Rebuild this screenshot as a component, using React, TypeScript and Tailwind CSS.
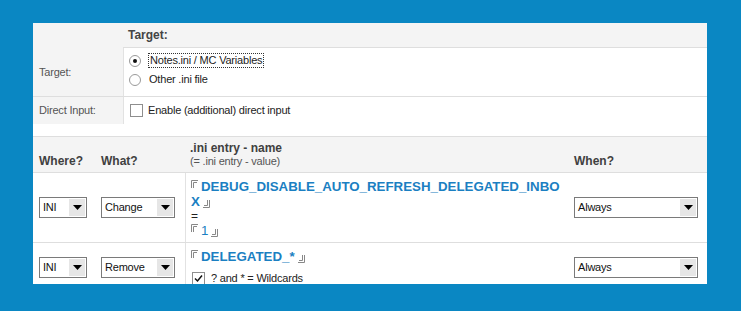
import React from "react";

function Arrow() {
  return (
    <div className="w-[16px] h-[17px] my-[1px] mr-[1px] bg-[#e6e6e6] flex items-center justify-center shrink-0">
      <svg width="9" height="5" viewBox="0 0 9 5">
        <path d="M0 0 H9 L4.5 5 Z" fill="#000" />
      </svg>
    </div>
  );
}

function Select({ value, width }: { value: string; width: string }) {
  return (
    <div className={`${width} h-[21px] border border-[#7a7a7a] bg-white flex items-center justify-between`}>
      <span className="pl-[3px] text-[11px] tracking-[-0.2px] text-[#111]">{value}</span>
      <Arrow />
    </div>
  );
}

function Open() {
  return (
    <svg width="8" height="8" viewBox="0 0 8 8" className="mr-[2px] self-start mt-[1px] shrink-0">
      <path d="M0.5 8 V0.5 H7" stroke="#888" strokeWidth="1" fill="none" />
      <path d="M2.5 8 V2.5 H6" stroke="#888" strokeWidth="1" fill="none" />
    </svg>
  );
}

function Close() {
  return (
    <svg width="8" height="8" viewBox="0 0 8 8" className="ml-[2px] self-end mb-[1px] shrink-0">
      <path d="M7.5 0 V7.5 H1" stroke="#888" strokeWidth="1" fill="none" />
      <path d="M5.5 0 V5.5 H2" stroke="#888" strokeWidth="1" fill="none" />
    </svg>
  );
}

function Radio({ checked }: { checked?: boolean }) {
  return (
    <div className="w-[12px] h-[12px] rounded-full border border-[#9a9a9a] bg-white flex items-center justify-center shrink-0">
      {checked && <div className="w-[4px] h-[4px] rounded-full bg-[#111]" />}
    </div>
  );
}

function Checkbox({ checked }: { checked?: boolean }) {
  return (
    <div className="w-[13px] h-[13px] border border-[#8e8e8e] bg-white flex items-center justify-center shrink-0">
      {checked && (
        <svg width="9" height="9" viewBox="0 0 9 9">
          <path d="M1 4.5 L3.5 7 L8 1.5" stroke="#111" strokeWidth="1.5" fill="none" />
        </svg>
      )}
    </div>
  );
}

export default function App() {
  return (
    <div className="w-[741px] h-[311px] bg-[#0a87c3] pt-[23px] pl-[33px] font-['Liberation_Sans',Arial,sans-serif]">
      <div className="w-[674px] h-[261px] bg-white overflow-hidden text-[11px] tracking-[-0.2px] text-[#222]">
        {/* Top section */}
        <div className="flex">
          <div className="w-[90px] bg-[#f4f4f4] flex items-end">
            <div className="h-[48px] flex items-center pl-[6px] text-[#555]">Target:</div>
          </div>
          <div className="flex-1">
            <div className="h-[25px] bg-[#f4f4f4] border-b border-[#dedede] flex items-center pl-[5px] text-[12px] tracking-normal font-bold text-[#444]">
              Target:
            </div>
            <div className="h-[48px] border-l border-[#e2e2e2] pl-[5px] pt-[3px] flex flex-col">
              <div className="h-[19px] flex items-center gap-[7px]">
                <Radio checked />
                <span className="border border-dotted border-[#333] px-[1px] leading-[13px]">Notes.ini / MC Variables</span>
              </div>
              <div className="h-[19px] flex items-center gap-[8px]">
                <Radio />
                <span>Other .ini file</span>
              </div>
            </div>
          </div>
        </div>
        <div className="flex border-t border-[#dedede] h-[28px]">
          <div className="w-[90px] bg-[#f4f4f4] flex items-center pl-[6px] text-[#555]">Direct Input:</div>
          <div className="flex-1 border-l border-[#e2e2e2] flex items-center pl-[6px] gap-[5px]">
            <Checkbox />
            <span>Enable (additional) direct input</span>
          </div>
        </div>
        <div className="h-[13px] border-b border-[#dedede]" />

        {/* Table header */}
        <div className="grid grid-cols-[62px_90px_383px_139px] h-[36px] bg-[#f4f4f4] border-b border-[#dedede] items-end pb-[4px] tracking-normal">
          <div className="pl-[6px] text-[12px] font-bold text-[#404040] leading-[14px]">Where?</div>
          <div className="pl-[6px] text-[12px] font-bold text-[#404040] leading-[14px]">What?</div>
          <div className="pl-[5px] flex flex-col">
            <span className="text-[12px] font-bold text-[#404040] leading-[13px]">.ini entry - name</span>
            <span className="text-[#555] text-[11px] tracking-[-0.2px] leading-[13px]">(= .ini entry - value)</span>
          </div>
          <div className="pl-[6px] text-[12px] font-bold text-[#404040] leading-[14px]">When?</div>
        </div>

        {/* Row 1 */}
        <div className="grid grid-cols-[62px_90px_383px_139px] h-[70px] border-b border-[#dedede]">
          <div className="pl-[6px] flex items-center">
            <Select value="INI" width="w-[48px]" />
          </div>
          <div className="pl-[6px] flex items-center">
            <Select value="Change" width="w-[74px]" />
          </div>
          <div className="border-l border-[#e2e2e2] pl-[5px] pt-[6px] flex flex-col text-[#1b7fc2] text-[13.3px] tracking-normal font-bold">
            <div className="h-[15px] flex leading-[15px]">
              <Open />
              <span>DEBUG_DISABLE_AUTO_REFRESH_DELEGATED_INBO</span>
            </div>
            <div className="h-[15px] flex leading-[15px]">
              <span>X</span>
              <Close />
            </div>
            <div className="h-[14px] leading-[14px] text-[#222] font-normal text-[12px]">=</div>
            <div className="h-[15px] flex leading-[15px] font-normal">
              <Open />
              <span>1</span>
              <Close />
            </div>
          </div>
          <div className="pl-[6px] flex items-center">
            <Select value="Always" width="w-[124px]" />
          </div>
        </div>

        {/* Row 2 */}
        <div className="grid grid-cols-[62px_90px_383px_139px] h-[48px]">
          <div className="pl-[6px] flex items-center">
            <Select value="INI" width="w-[48px]" />
          </div>
          <div className="pl-[6px] flex items-center">
            <Select value="Remove" width="w-[74px]" />
          </div>
          <div className="border-l border-[#e2e2e2] pl-[5px] pt-[6px] flex flex-col">
            <div className="h-[15px] flex leading-[15px] text-[#1b7fc2] text-[13.3px] tracking-normal font-bold">
              <Open />
              <span>DELEGATED_*</span>
              <Close />
            </div>
            <div className="mt-[6px] flex items-center gap-[6px] pl-[1px]">
              <Checkbox checked />
              <span>? and * = Wildcards</span>
            </div>
          </div>
          <div className="pl-[6px] flex items-center">
            <Select value="Always" width="w-[124px]" />
          </div>
        </div>
      </div>
    </div>
  );
}
